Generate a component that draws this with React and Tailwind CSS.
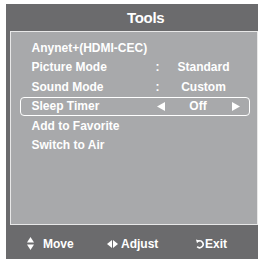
import React from "react";

const items = [
  { label: "Anynet+(HDMI-CEC)" },
  { label: "Picture Mode", value: "Standard" },
  { label: "Sound Mode", value: "Custom" },
  { label: "Sleep Timer", value: "Off", selected: true },
  { label: "Add to Favorite" },
  { label: "Switch to Air" },
];

const Left = () => (
  <svg width="8" height="9" viewBox="0 0 8 9">
    <polygon points="8,0 8,9 0,4.5" fill="white" />
  </svg>
);

const Right = () => (
  <svg width="8" height="9" viewBox="0 0 8 9">
    <polygon points="0,0 0,9 8,4.5" fill="white" />
  </svg>
);

export default function App() {
  return (
    <div className="w-[260px] h-[259px] bg-white overflow-hidden font-['Liberation_Sans',Arial,sans-serif] font-bold text-white">
      <div className="ml-[6px] mt-[4px] w-[252px] h-[255px] bg-[#6b6b6d] flex flex-col">
        {/* header */}
        <div className="h-[27px] flex items-center pl-[121px] text-[15px] leading-none tracking-[-0.3px]">
          Tools
        </div>

        {/* list */}
        <div className="ml-[4px] w-[248px] h-[194px] bg-[#a8a9ab] border border-[#e8e8e8] pt-[6px]">
          {items.map((it) => (
            <div
              key={it.label}
              className={`ml-[9px] w-[230px] h-[19.5px] flex items-center pl-[10.5px] text-[12px] leading-none rounded-[4px] border-[1.5px] ${
                it.selected ? "border-white" : "border-transparent"
              }`}
            >
              <span className="w-[124px] shrink-0 whitespace-nowrap">{it.label}</span>
              {it.selected ? (
                <>
                  <span className="w-[9px] shrink-0 flex justify-start pl-[1px]">
                    <Left />
                  </span>
                  <span className="w-[67px] shrink-0 text-center">{it.value}</span>
                  <span className="shrink-0">
                    <Right />
                  </span>
                </>
              ) : it.value ? (
                <>
                  <span className="w-[9px] shrink-0">:</span>
                  <span className="w-[78px] shrink-0 text-center">{it.value}</span>
                </>
              ) : null}
            </div>
          ))}
        </div>

        {/* footer */}
        <div className="flex-1 flex items-center pt-[3px] pl-[21px] text-[12px] leading-none">
          <div className="w-[80px] flex items-center">
            <svg width="7" height="13" viewBox="0 0 7 13">
              <polygon points="3.5,0 7,5.5 0,5.5" fill="white" />
              <polygon points="0,7.5 7,7.5 3.5,13" fill="white" />
            </svg>
            <span className="ml-[9px]">Move</span>
          </div>
          <div className="w-[89px] flex items-center">
            <svg width="11" height="8" viewBox="0 0 11 8">
              <polygon points="5,0 5,8 0,4" fill="white" />
              <polygon points="6,0 6,8 11,4" fill="white" />
            </svg>
            <span className="ml-[3px]">Adjust</span>
          </div>
          <div className="flex items-center">
            <svg width="8" height="10" viewBox="0 0 8 10">
              <path
                d="M2.2 2.2 A3.4 3.4 0 1 1 1.2 7.6"
                fill="none"
                stroke="white"
                strokeWidth="1.6"
              />
              <polygon points="0,0.4 3.8,1.6 1,4.2" fill="white" />
            </svg>
            <span className="ml-[1px]">Exit</span>
          </div>
        </div>
      </div>
    </div>
  );
}
